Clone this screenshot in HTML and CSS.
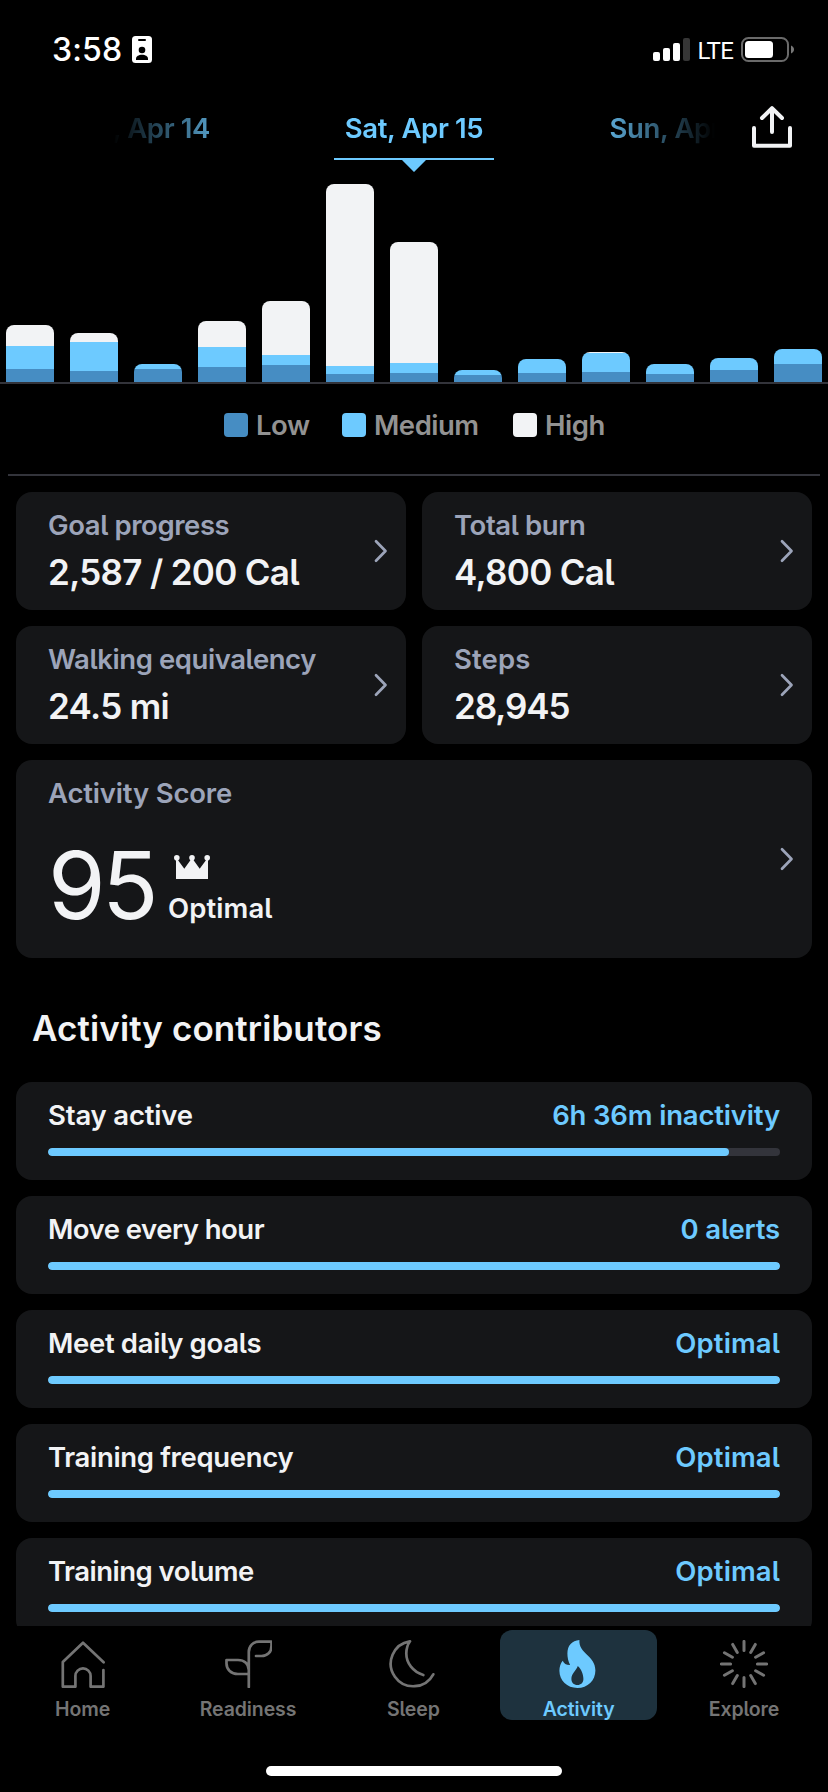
FILE: index.html
```html
<!DOCTYPE html>
<html lang="en">
<head>
<meta charset="utf-8">
<title>Activity</title>
<link rel="stylesheet" href="styles.css">
</head>
<body>
<div class="app">
  <header class="status">
    <span class="time">3:58</span>
    <svg class="badge" width="20" height="27" viewBox="0 0 20 27"><rect width="20" height="27" rx="3.5" fill="#fff"/><rect x="6" y="3" width="8" height="2" rx="1"/><circle cx="10" cy="14" r="3.3"/><path d="M4 24v-1.2c0-2.4 2.6-4 6-4s6 1.6 6 4V24z"/></svg>
    <svg class="signal" width="37" height="23" viewBox="0 0 37 23" fill="#fff"><rect y="14" width="7" height="9" rx="2"/><rect x="10" y="10" width="7" height="13" rx="2"/><rect x="20" y="5" width="7" height="18" rx="2"/><rect x="30" width="7" height="23" rx="2" fill="#363636"/></svg>
    <span class="network">LTE</span>
    <svg class="battery" width="53" height="25" viewBox="0 0 53 25"><rect x="1" y="1" width="46" height="23" rx="6.5" fill="none" stroke="#6a6a6a" stroke-width="2"/><rect x="4" y="4" width="28" height="17" rx="3.5" fill="#fff"/><path d="M50 8.500c4 1.500 4 6.500 0 8z" fill="#777"/></svg>
  </header>

  <div class="top">
    <nav class="dates">
      <span class="date">Fri, Apr 14</span>
      <span class="date">Sat, Apr 15<svg class="marker" width="160" height="14" viewBox="0 0 160 14"><path d="M0 0h160v2h-68L80 14 68 2H0z" fill="#6dcaff"/></svg></span>
      <span class="date">Sun, Apr 16</span>
    </nav>
    <svg class="share" width="40" height="42" viewBox="0 0 40 42" fill="none" stroke="#f2f3f5" stroke-width="4" stroke-linecap="round" stroke-linejoin="round"><path d="M20 2.500V26M10 12 20 2.200 30 12M2 22v17.800h36V22"/></svg>
  </div>

  <main class="content">
    <div class="chart">
      <div class="bar"><i class="high" style="height:21px"></i><i class="med" style="height:23px"></i><i class="low" style="height:13px"></i></div>
      <div class="bar"><i class="high" style="height:8.6px"></i><i class="med" style="height:29px"></i><i class="low" style="height:11px"></i></div>
      <div class="bar"><i class="med" style="height:5px"></i><i class="low" style="height:13px"></i></div>
      <div class="bar"><i class="high" style="height:25.6px"></i><i class="med" style="height:20px"></i><i class="low" style="height:15px"></i></div>
      <div class="bar"><i class="high" style="height:53.6px"></i><i class="med" style="height:10px"></i><i class="low" style="height:17px"></i></div>
      <div class="bar"><i class="high" style="height:182px"></i><i class="med" style="height:8px"></i><i class="low" style="height:8px"></i></div>
      <div class="bar"><i class="high" style="height:120.6px"></i><i class="med" style="height:10px"></i><i class="low" style="height:9px"></i></div>
      <div class="bar"><i class="med" style="height:4.7px"></i><i class="low" style="height:7px"></i></div>
      <div class="bar"><i class="med" style="height:14.5px"></i><i class="low" style="height:9px"></i></div>
      <div class="bar"><i class="high" style="height:1.5px"></i><i class="med" style="height:19px"></i><i class="low" style="height:10px"></i></div>
      <div class="bar"><i class="med" style="height:10.4px"></i><i class="low" style="height:8px"></i></div>
      <div class="bar"><i class="med" style="height:12.4px"></i><i class="low" style="height:12px"></i></div>
      <div class="bar"><i class="med" style="height:15.2px"></i><i class="low" style="height:18px"></i></div>
    </div>
    <div class="legend">
      <span class="key"><i class="low"></i>Low</span>
      <span class="key"><i class="med"></i>Medium</span>
      <span class="key"><i class="high"></i>High</span>
    </div>

    <section class="cards">
      <article class="card">
        <div><h3 class="label">Goal progress</h3><p class="value">2,587 / 200 Cal</p></div>
        <svg class="chevron" viewBox="0 0 14 24"><path d="M2 2.200 11.500 12 2 21.800"/></svg>
      </article>
      <article class="card">
        <div><h3 class="label">Total burn</h3><p class="value">4,800 Cal</p></div>
        <svg class="chevron" viewBox="0 0 14 24"><path d="M2 2.200 11.500 12 2 21.800"/></svg>
      </article>
      <article class="card">
        <div><h3 class="label">Walking equivalency</h3><p class="value">24.5 mi</p></div>
        <svg class="chevron" viewBox="0 0 14 24"><path d="M2 2.200 11.500 12 2 21.800"/></svg>
      </article>
      <article class="card">
        <div><h3 class="label spaced">Steps</h3><p class="value tight">28,945</p></div>
        <svg class="chevron" viewBox="0 0 14 24"><path d="M2 2.200 11.500 12 2 21.800"/></svg>
      </article>
      <article class="card score">
        <div>
          <h3 class="label wide">Activity Score</h3>
          <div class="result">
            <span class="points">95</span>
            <div class="rating">
              <svg class="crown" width="36" height="24" viewBox="0 0 36 24" fill="#f2f3f5"><circle cx="2.800" cy="2.800" r="2.800"/><circle cx="18" cy="2.800" r="2.800"/><circle cx="33.200" cy="2.800" r="2.800"/><path d="M2 24V4.500h1.500L10.300 13.700 17.300 4h1.400L25.700 13.700 32.500 4.500H34V24z"/></svg>
              <span class="spaced">Optimal</span>
            </div>
          </div>
        </div>
        <svg class="chevron" viewBox="0 0 14 24"><path d="M2 2.200 11.500 12 2 21.800"/></svg>
      </article>
    </section>

    <h2 class="heading">Activity contributors</h2>
    <section class="contributors">
      <article class="item"><div class="row"><span class="wide">Stay active</span><span class="state wide">6h 36m inactivity</span></div><div class="track"><div class="fill" style="width:93.1%"></div></div></article>
      <article class="item"><div class="row"><span class="snug">Move every hour</span><span class="state wide">0 alerts</span></div><div class="track"><div class="fill" style="width:100%"></div></div></article>
      <article class="item"><div class="row"><span>Meet daily goals</span><span class="state spaced">Optimal</span></div><div class="track"><div class="fill" style="width:100%"></div></div></article>
      <article class="item"><div class="row"><span>Training frequency</span><span class="state spaced">Optimal</span></div><div class="track"><div class="fill" style="width:100%"></div></div></article>
      <article class="item"><div class="row"><span class="snug">Training volume</span><span class="state spaced">Optimal</span></div><div class="track"><div class="fill" style="width:100%"></div></div></article>
    </section>
  </main>

  <footer class="footer">
    <nav class="tabs">
      <a class="tab"><svg class="icon" viewBox="0 0 48 48"><path d="M44.600 22.300 24 2.700 3.800 22v24.700h12.600V36a7.600 7.600 0 0 1 15.200 0v10.700h12.800V30"/></svg>Home</a>
      <a class="tab"><svg class="icon" viewBox="0 0 48 48"><path d="M24.800 47V12c0-6 4.200-10.300 10.200-10.300h12.500V6c0 6-4.200 10-10 10H32M24.800 34H14C7 34 2.500 29.500 2.500 23.500V20H14c6.500 0 10.800 4.200 10.800 10"/></svg>Readiness</a>
      <a class="tab"><svg class="icon" viewBox="0 0 48 48"><path d="M34.300 35C24 32 17.300 23 17.300 13.500c0-5 1.400-9 3.700-12.200A22.600 22.600 0 1 0 44.300 34.300"/></svg>Sleep</a>
      <a class="tab active"><svg class="flame" viewBox="0 0 48 48"><path fill-rule="evenodd" d="M24.400 0C23.500 14 40.400 15 40.400 30.500c0 10-7.700 17.500-18 17.500s-18-7.300-18-17.200c0-4 1.200-7.500 3.300-10.100 1.200 2.700 3.500 4.400 7.400 4.300-1.800-3.600-2.700-7.500-2.700-11.500C12.400 5.500 17 .6 24.400 0zM22.800 26c-1.700 4.500-6.400 7.500-6.400 13 0 3.700 2.500 6 6 6s6-2.300 6-6c0-4.500-2-10-5.600-13z"/></svg>Activity</a>
      <a class="tab"><svg class="icon rays" viewBox="-24 -24 48 48"><path d="M0-22.600v9.200M0 22.600v-9.200M-22.600 0h9.200M22.600 0h-9.200M11.300-19.570l-4.600 7.970M19.570-11.300l-7.970 4.600M19.570 11.300l-7.970-4.600M11.300 19.570l-4.600-7.970M-11.300 19.570l4.600-7.970M-19.570 11.300l7.970-4.600M-19.570-11.300l7.970 4.600M-11.300-19.570l4.600 7.970"/></svg>Explore</a>
    </nav>
    <div class="home-bar"></div>
  </footer>
</div>
</body>
</html>
```
FILE: styles.css
```css
* { box-sizing: border-box; margin: 0; padding: 0; }
body { background: #000; }
.app {
  width: 828px; height: 1792px; overflow: hidden;
  display: flex; flex-direction: column;
  background: #000; color: #f2f3f5;
  font-family: Inter, Roboto, sans-serif; font-size: 27.5px; font-weight: 600;
  line-height: 32px; letter-spacing: -.33px; font-feature-settings: "cv05"; white-space: nowrap;
}
svg { display: block; flex: none; }

.status { height: 98px; padding: 1px 34px 0 52px; display: flex; align-items: center; color: #fff; flex: none; }
.time { width: 80px; font-size: 32px; font-weight: 500; letter-spacing: .15px; }
.signal { margin-left: auto; }
.network { width: 51px; padding-left: 7.5px; margin-top: 3px; font-family: Roboto, sans-serif; font-size: 24px; font-weight: 400; letter-spacing: -.6px; }

.top { height: 74px; display: flex; flex: none; }
.dates {
  width: 602px; margin-left: 113px; overflow: hidden;
  display: grid; grid-template-columns: repeat(3, 269px); justify-content: center; justify-items: center;
  color: #6dcaff; letter-spacing: -.37px; line-height: 60px;
  -webkit-mask-image: linear-gradient(90deg, transparent, #000 127px, #000 475px, transparent);
  mask-image: linear-gradient(90deg, transparent, #000 127px, #000 475px, transparent);
}
.date { display: flex; flex-direction: column; align-items: center; }
.share { margin: 8px 0 0 37px; }

.content { height: 1454px; overflow: hidden; flex: none; }
.chart { height: 212px; padding: 0 6px; display: flex; gap: 16px; align-items: flex-end; border-bottom: 2px solid #33343b; }
.bar { width: 48px; overflow: hidden; border-radius: 8px 8px 0 0; }
.bar i { display: block; }
.low { background: #468dc3; }
.med { background: #6dcaff; }
.high { background: #f2f3f5; }

.legend {
  margin: 0 8px; padding: 29px 0 37px 216px; border-bottom: 2px solid #33343b;
  display: grid; grid-template-columns: 118px 171px auto; line-height: 24px; color: #929292;
}
.key { display: flex; gap: 8px; letter-spacing: -.5px; }
.key i { width: 24px; height: 24px; border-radius: 4px; }

.cards { padding: 16px 16px 0; display: grid; grid-template-columns: 1fr 1fr; gap: 16px; }
.card { height: 118px; padding: 17px 18px 0 32px; border-radius: 16px; background: #151618; display: flex; justify-content: space-between; }
.label { font-size: 27.5px; font-weight: 600; letter-spacing: -.42px; color: #9ca4b9; }
.value { margin-top: 11px; font-size: 35px; line-height: 40px; letter-spacing: -.68px; }
.tight { letter-spacing: -1.1px; }
.chevron { width: 14px; height: 24px; margin-top: -17px; align-self: center; fill: none; stroke: #9ca4b9; stroke-width: 2.7; stroke-linecap: round; stroke-linejoin: round; }
.score { grid-column: 1 / 3; height: 198px; }
.result { margin-top: 28px; display: flex; }
.points { width: 120px; font-size: 93px; line-height: 96px; font-weight: 400; letter-spacing: -3.6px; }
.crown { margin: 18px 0 13px 6px; }

.heading { margin: 48px 32px 32px; font-size: 35px; font-weight: 600; line-height: 44px; letter-spacing: .1px; }
.contributors { padding: 0 16px; display: flex; flex-direction: column; gap: 16px; }
.item { height: 98px; padding: 17px 32px 24px; border-radius: 16px; background: #151618; }
.row { display: flex; justify-content: space-between; }
.state { color: #6dcaff; }
.track { height: 8px; margin-top: 17px; border-radius: 4px; overflow: hidden; background: #33343b; }
.fill { height: 8px; border-radius: 4px; background: #6dcaff; }

.snug { letter-spacing: -.52px; }
.wide { letter-spacing: -.17px; }
.spaced { letter-spacing: .1px; }

.footer { height: 166px; display: flex; flex-direction: column; align-items: center; flex: none; }
.tabs { width: 828px; height: 140px; padding-top: 4px; display: grid; grid-template-columns: repeat(5, 165.33px); color: #747474; font-size: 19.5px; line-height: 24px; letter-spacing: -.1px; }
.tab { height: 90px; margin: 0 4px; padding-top: 10px; border-radius: 12px; display: flex; flex-direction: column; align-items: center; gap: 9px; }
.active { background: #1e323e; color: #6dcaff; }
.icon { width: 48px; height: 48px; fill: none; stroke: #747474; stroke-width: 2.7; stroke-linecap: round; stroke-linejoin: round; }
.rays { stroke-width: 3; }
.flame { width: 48px; height: 48px; fill: #6dcaff; }
.home-bar { width: 296px; height: 10px; border-radius: 5px; background: #fff; }
```
